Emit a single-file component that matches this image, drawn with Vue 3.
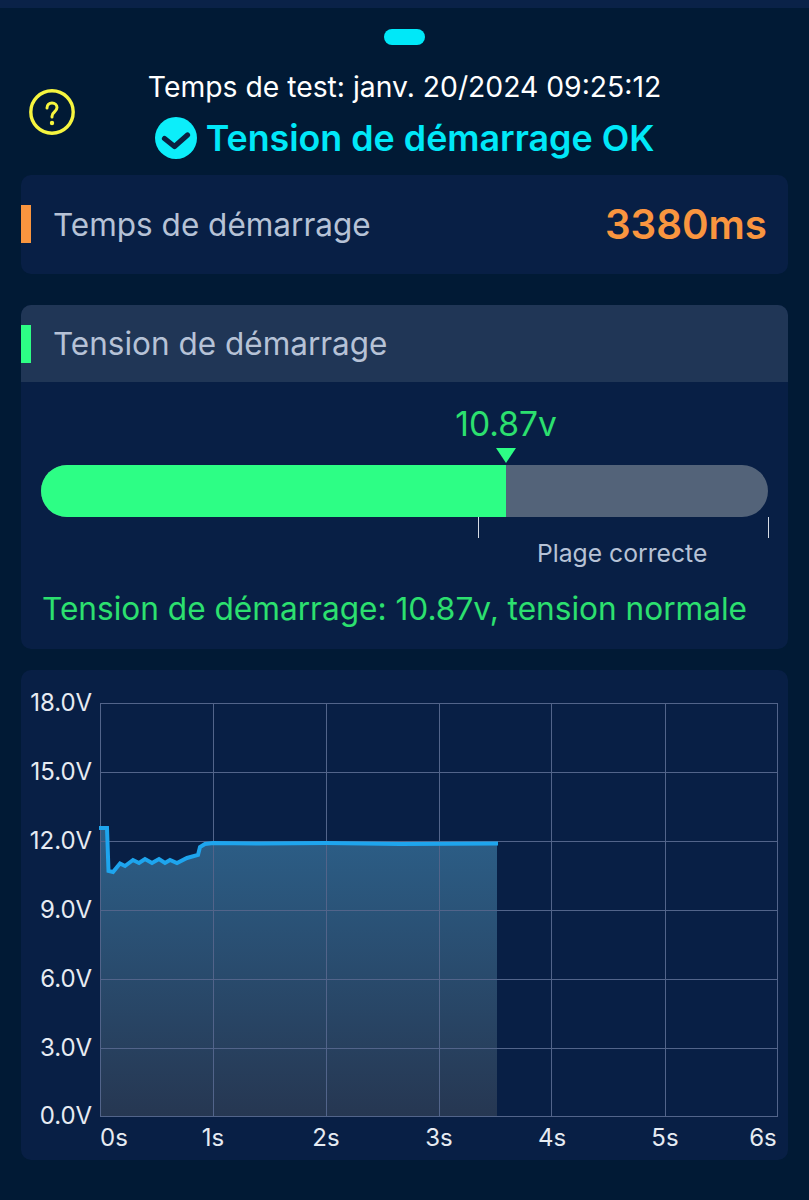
<script setup>
const yLabels = [
  { text: '18.0V', y: 703 },
  { text: '15.0V', y: 772 },
  { text: '12.0V', y: 841 },
  { text: '9.0V', y: 910 },
  { text: '6.0V', y: 979 },
  { text: '3.0V', y: 1048 },
  { text: '0.0V', y: 1116 }
]
const xLabels = [
  { text: '0s', x: 114 },
  { text: '1s', x: 213 },
  { text: '2s', x: 326 },
  { text: '3s', x: 439 },
  { text: '4s', x: 552 },
  { text: '5s', x: 665 },
  { text: '6s', x: 763 }
]
const gridX = [100, 213, 326, 439, 551, 665, 777]

// voltage curve, in page pixels
const curve = '99,828 107,828 108.5,871 113,872 120,863.5 125,866 133,860 139,863 145,859 152,863 159,859 165,863 170,860 177,863 187,858 198,855 200,847 205,844 213,843 260,843.5 326,843 400,844 498,843.5'
const area = '100,828 107,828 108.5,871 113,872 120,863.5 125,866 133,860 139,863 145,859 152,863 159,859 165,863 170,860 177,863 187,858 198,855 200,847 205,844 213,843 260,843.5 326,843 400,844 497,843.5 497,1116 100,1116'
</script>

<template>
  <div class="page">
    <div class="top-strip"></div>
    <div class="handle"></div>

    <div class="head">
      <svg class="help" width="46" height="46" viewBox="0 0 46 46">
        <circle cx="23" cy="23" r="21.2" fill="none" stroke="#f6f53f" stroke-width="3.4" />
        <path d="M18 19c0-3 2.1-5 5-5s5 2 5 4.6c0 2.2-1.2 3.3-2.6 4.4-1.5 1.2-2.4 2.2-2.4 4.2v.8" fill="none" stroke="#f6f53f" stroke-width="3" stroke-linecap="round" />
        <circle cx="23" cy="34" r="2.2" fill="#f6f53f" />
      </svg>
      <div class="time">Temps de test: janv. 20/2024 09:25:12</div>
      <div class="status">
        <svg width="42" height="42" viewBox="0 0 42 42">
          <circle cx="21" cy="21" r="21" fill="#0ceefa" />
          <path d="M9.5 21.5l10 8 13-11.5" fill="none" stroke="#0a2040" stroke-width="5.2" stroke-linecap="round" stroke-linejoin="round" />
        </svg>
        <span>Tension de démarrage OK</span>
      </div>
    </div>

    <div class="card time-card">
      <div class="row">
        <i class="mark orange"></i>
        <span class="label">Temps de démarrage</span>
        <span class="ms">3380ms</span>
      </div>
    </div>

    <div class="card volt-card">
      <div class="volt-head">
        <i class="mark green"></i>
        <span class="label">Tension de démarrage</span>
      </div>
      <div class="volt-body">
        <div class="value">10.87v</div>
        <div class="arrow"></div>
        <div class="bar">
          <div class="bar-fill"></div>
        </div>
        <div class="range">
          <div class="range-inner">Plage correcte</div>
        </div>
        <div class="msg">Tension de démarrage: 10.87v, tension normale</div>
      </div>
    </div>

    <div class="card chart-card">
      <svg width="767" height="490" viewBox="21 670 767 490">
        <defs>
          <linearGradient id="fillGrad" x1="0" y1="0" x2="0" y2="1">
            <stop offset="0" stop-color="#2c5f88" />
            <stop offset="1" stop-color="#263752" />
          </linearGradient>
        </defs>
        <polygon :points="area" fill="url(#fillGrad)" />
        <line v-for="l in yLabels" :key="l.text" x1="100" x2="777" :y1="l.y + 0.5" :y2="l.y + 0.5" stroke="#52648a" stroke-width="1" />
        <line v-for="x in gridX" :key="x" :x1="x + 0.5" :x2="x + 0.5" y1="703" y2="1117" stroke="#52648a" stroke-width="1" />
        <polyline :points="curve" fill="none" stroke="#1ea5ee" stroke-width="4" />
        <text v-for="l in yLabels" :key="l.text" class="tick" x="92" :y="l.y + 8" text-anchor="end">{{ l.text }}</text>
        <text v-for="l in xLabels" :key="l.text" class="tick" :x="l.x" y="1146" text-anchor="middle">{{ l.text }}</text>
      </svg>
    </div>
  </div>
</template>

<style>
html, body {
  background: #011a35;
}
</style>

<style scoped>
.page {
  width: 809px;
  height: 1200px;
  background: #011a35;
  font-family: Inter, "Liberation Sans", sans-serif;
  overflow: hidden;
}
.top-strip {
  height: 8px;
  background: #0a2248;
}
.handle {
  width: 41px;
  height: 16px;
  margin: 21px auto 0;
  border-radius: 8px;
  background: #00e8f8;
}
.head {
  position: relative;
  height: 130px;
  text-align: center;
}
.help {
  position: absolute;
  left: 29px;
  top: 44px;
}
.time {
  padding-top: 26px;
  height: 33px;
  line-height: 33px;
  font-size: 28.3px;
  color: #fff;
}
.status {
  display: flex;
  align-items: center;
  justify-content: center;
  gap: 9px;
  margin-top: 13px;
  height: 42px;
  color: #00e8f8;
  font-size: 35.8px;
  font-weight: 600;
}
.card {
  width: 767px;
  margin-left: 21px;
  background: #081f45;
  border-radius: 10px;
  overflow: hidden;
}
.time-card {
  height: 99px;
}
.row {
  display: flex;
  align-items: center;
  height: 98px;
  padding-right: 21px;
}
.mark {
  display: block;
  width: 10px;
  height: 38px;
  margin-right: 22px;
}
.orange {
  background: #f9953f;
}
.green {
  background: #2dfe85;
}
.label {
  font-size: 31.5px;
  color: #b6c2d6;
}
.ms {
  margin-left: auto;
  font-size: 40.3px;
  font-weight: 600;
  color: #f9953f;
}
.volt-card {
  height: 344px;
  margin-top: 31px;
}
.volt-head {
  display: flex;
  align-items: center;
  height: 77px;
  background: #203656;
}
.volt-body {
  padding: 0 20px;
}
.value {
  width: 204px;
  margin: 22px 0 0 363px;
  height: 40px;
  line-height: 40px;
  font-size: 33.6px;
  color: #2ce06f;
  text-align: center;
}
.arrow {
  width: 0;
  height: 0;
  margin: 4px 0 2px 455px;
  border-left: 10px solid transparent;
  border-right: 10px solid transparent;
  border-top: 15px solid #2dfe85;
}
.bar {
  width: 727px;
  height: 52px;
  border-radius: 26px;
  background: #536379;
  overflow: hidden;
}
.bar-fill {
  width: 465px;
  height: 100%;
  background: #2dfe85;
}
.range {
  width: 291px;
  height: 21px;
  margin-left: 437px;
  border-left: 1px solid #d6dce6;
  border-right: 1px solid #d6dce6;
  box-sizing: border-box;
}
.range-inner {
  padding-top: 21px;
  padding-left: 58px;
  line-height: 30px;
  font-size: 24.7px;
  color: #b6c2d6;
  white-space: nowrap;
}
.msg {
  margin-top: 52px;
  margin-left: 1px;
  line-height: 38px;
  font-size: 31.6px;
  color: #2ce06f;
  white-space: nowrap;
}
.chart-card {
  height: 490px;
  margin-top: 21px;
}
.chart-card svg {
  display: block;
}
.tick {
  font-size: 24px;
  fill: #e6ebf2;
}
</style>
